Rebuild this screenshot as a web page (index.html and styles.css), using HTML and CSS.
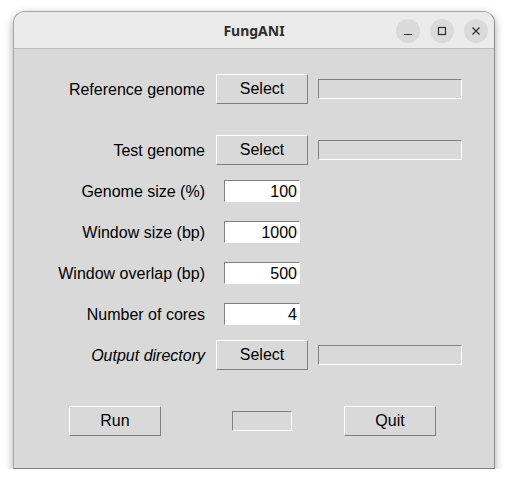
FILE: index.html
```html
<!DOCTYPE html>
<html>
<head>
<meta charset="utf-8">
<link rel="stylesheet" href="styles.css">
</head>
<body>
<div class="window">
  <div class="titlebar">
    <span class="title">FungANI</span>
    <div class="controls">
      <span class="ctl"><svg width="10" height="10" viewBox="0 0 10 10"><path d="M1 8.5h8" stroke="#2e2e2e" stroke-width="1.2"/></svg></span>
      <span class="ctl"><svg width="10" height="10" viewBox="0 0 10 10"><rect x="1.5" y="1.5" width="7" height="7" fill="none" stroke="#2e2e2e" stroke-width="1.2"/></svg></span>
      <span class="ctl"><svg width="10" height="10" viewBox="0 0 10 10"><path d="M1.5 1.5l7 7M8.5 1.5l-7 7" stroke="#2e2e2e" stroke-width="1.2"/></svg></span>
    </div>
  </div>
  <div class="content">
    <div class="form">
      <label class="lbl">Reference genome</label>
      <div class="btn sel">Select</div>
      <div class="path"></div>

      <div class="spacer"></div>

      <label class="lbl">Test genome</label>
      <div class="btn sel">Select</div>
      <div class="path"></div>

      <label class="lbl">Genome size (%)</label>
      <div class="num">100</div>
      <div></div>

      <label class="lbl">Window size (bp)</label>
      <div class="num">1000</div>
      <div></div>

      <label class="lbl">Window overlap (bp)</label>
      <div class="num">500</div>
      <div></div>

      <label class="lbl">Number of cores</label>
      <div class="num">4</div>
      <div></div>

      <label class="lbl italic">Output directory</label>
      <div class="btn sel">Select</div>
      <div class="path"></div>
    </div>
    <div class="actions">
      <div class="btn run">Run</div>
      <div class="status"></div>
      <div class="btn quit">Quit</div>
    </div>
  </div>
</div>
</body>
</html>
```
FILE: styles.css
```css
html, body {
  margin: 0;
  padding: 0;
  background: #ffffff;
}
body {
  padding: 11px 0 0 13px;
  font-family: "Liberation Sans", Arial, sans-serif;
}
.window {
  width: 480px;
  height: 456px;
  border: 1px solid #a8a8a8;
  border-bottom-color: #808080;
  border-right-color: #8c8c8c;
  border-radius: 12px 12px 0 0;
  box-shadow: 0 3px 9px rgba(0,0,0,0.35);
  background: #d9d9d9;
  display: flex;
  flex-direction: column;
  overflow: hidden;
}
.titlebar {
  height: 36px;
  flex: none;
  background: #ebebeb;
  border-bottom: 1px solid #bdbdbd;
  position: relative;
  display: flex;
  align-items: center;
  justify-content: center;
}
.title {
  font-family: "Noto Sans", "DejaVu Sans", sans-serif;
  font-weight: 700;
  font-size: 14px;
  color: #2e2e2e;
}
.controls {
  position: absolute;
  right: 6px;
  top: 7px;
  display: flex;
  gap: 10px;
}
.ctl {
  width: 24px;
  height: 24px;
  border-radius: 50%;
  background: #dadada;
  display: flex;
  align-items: center;
  justify-content: center;
}
.content {
  flex: 1;
  background: #d9d9d9;
  padding-top: 19px;
}
.form {
  display: grid;
  grid-template-columns: 191px 103px 154px;
  grid-template-rows: 41px 20px 41px 41px 41px 41px 41px 41px;
  align-items: center;
}
.spacer { grid-column: 1 / -1; }
.lbl {
  text-align: right;
  font-size: 16px;
  color: #000;
  padding-top: 2px;
}
.italic { font-style: italic; }
.btn {
  box-sizing: border-box;
  width: 92px;
  height: 30px;
  border: 1px solid;
  border-color: #ffffff #7f7f7f #7f7f7f #ffffff;
  background: #d9d9d9;
  font-size: 16px;
  color: #000;
  display: flex;
  align-items: center;
  justify-content: center;
}
.sel { margin-left: 11px; }
.path {
  box-sizing: border-box;
  width: 144px;
  height: 20px;
  border: 1px solid;
  border-color: #808080 #ffffff #ffffff #808080;
  background: #d9d9d9;
  margin-left: 10px;
}
.num {
  box-sizing: border-box;
  width: 76px;
  height: 22px;
  margin-left: 19px;
  border: 1px solid;
  border-color: #808080 #ffffff #ffffff #808080;
  background: #ffffff;
  font-size: 16px;
  color: #000;
  text-align: right;
  padding-right: 2px;
  line-height: 21px;
}
.actions {
  display: flex;
  align-items: center;
  padding-left: 55px;
  margin-top: 31px;
}
.status {
  box-sizing: border-box;
  width: 60px;
  height: 20px;
  border: 1px solid;
  border-color: #808080 #ffffff #ffffff #808080;
  margin-left: 71px;
}
.quit { margin-left: 52px; }
```
